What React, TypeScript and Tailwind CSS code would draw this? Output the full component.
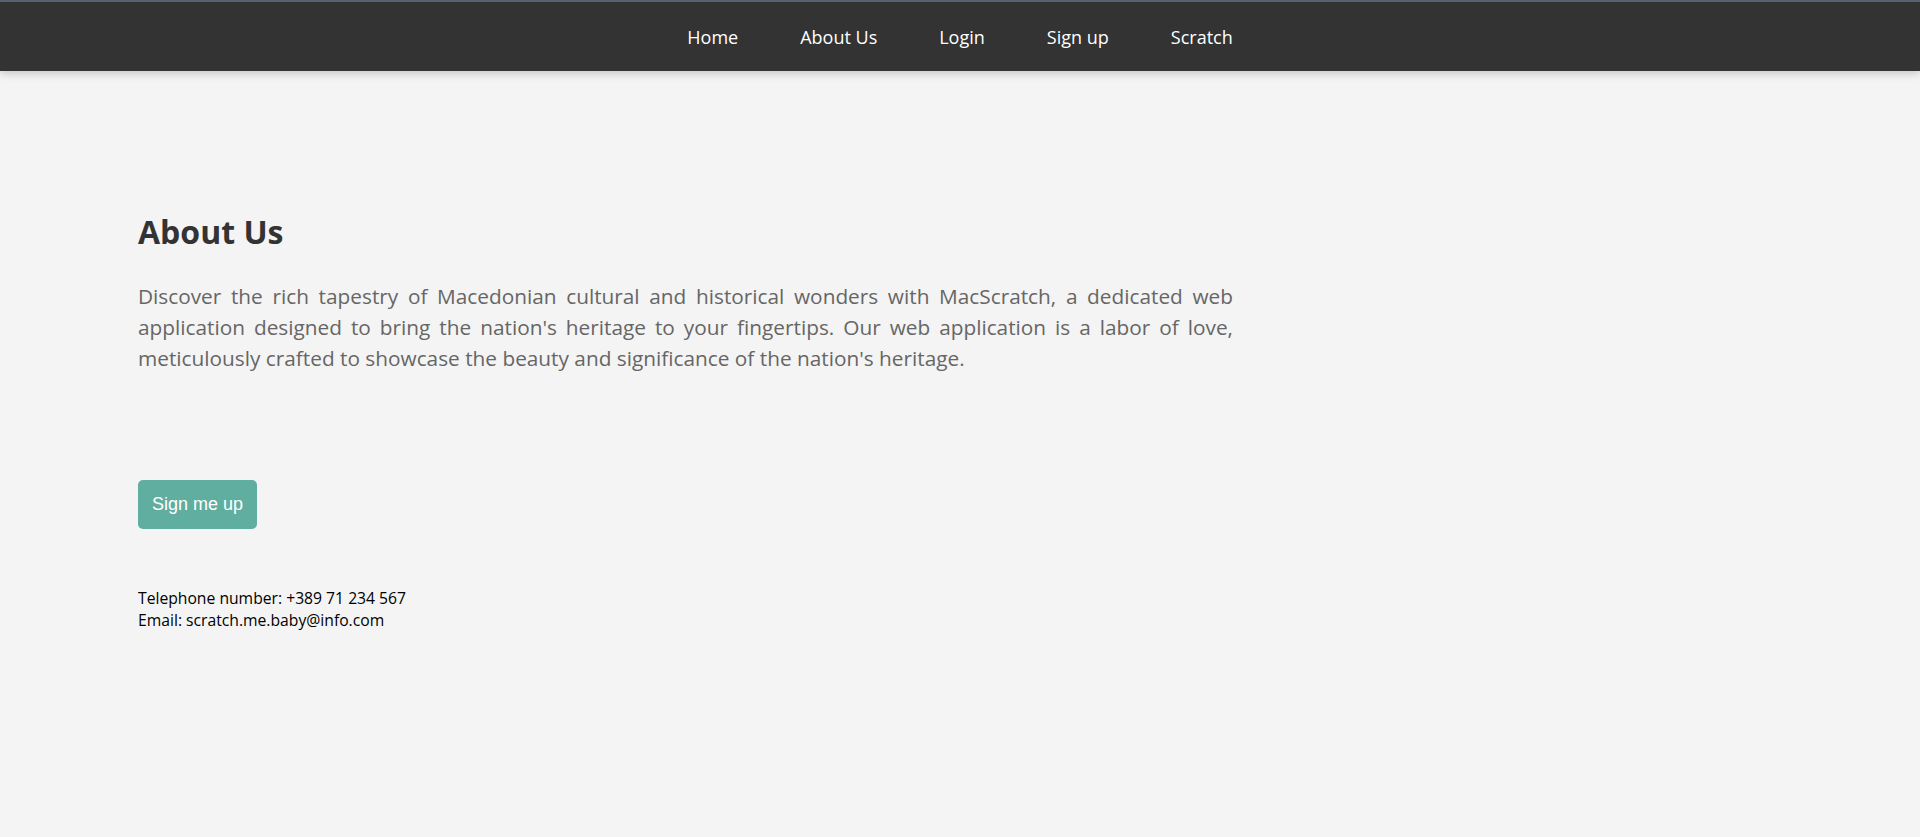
import React from "react";

export default function App() {
  const links = ["Home", "About Us", "Login", "Sign up", "Scratch"];
  return (
    <div className="min-h-[837px] bg-[#f4f4f4] font-['Open_Sans',sans-serif]">
      <nav className="relative z-10 h-[71px] border-t-2 border-[#5a6070] bg-[#333333] shadow-[0_3px_8px_rgba(0,0,0,0.18)]">
        <ul className="flex h-full items-center justify-center gap-[62px]">
          {links.map((l) => (
            <li key={l} className="text-[18px] leading-[24px] text-white">
              {l}
            </li>
          ))}
        </ul>
      </nav>
      <main className="pl-[138px] w-[1233px]">
        <h1 className="mt-[142px] text-[32px] leading-[38px] font-bold text-[#333333]">About Us</h1>
        <p className="mt-[30px] text-justify text-[20.8px] leading-[31.2px] text-[#666666]">
          Discover the rich tapestry of Macedonian cultural and historical wonders with MacScratch, a dedicated web
          application designed to bring the nation's heritage to your fingertips. Our web application is a labor of love,
          meticulously crafted to showcase the beauty and significance of the nation's heritage.
        </p>
        <button className="mt-[105px] h-[49px] rounded-[5px] bg-[#5faea0] px-[14px] font-['Liberation_Sans',Arial,sans-serif] text-[18px] text-white">
          Sign me up
        </button>
        <div className="mt-[58px] text-[15.7px] leading-[22px] text-black">
          <div>Telephone number: +389 71 234 567</div>
          <div>Email: scratch.me.baby@info.com</div>
        </div>
      </main>
    </div>
  );
}
